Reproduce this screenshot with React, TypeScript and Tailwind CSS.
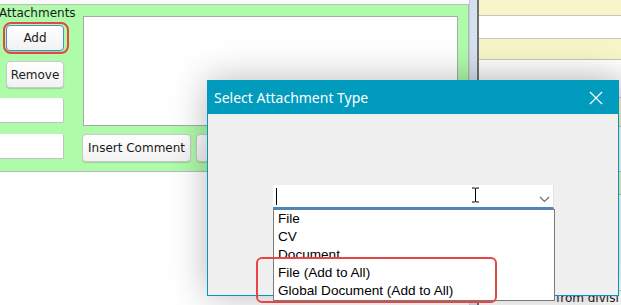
import React from "react";

const leftFont = { fontFamily: '"DejaVu Sans", sans-serif' };

function WinButton({ label, focused, className }: { label: string; focused?: boolean; className?: string }) {
  return (
    <div
      className={
        "flex items-center justify-center rounded-[4px] border bg-gradient-to-b from-white to-[#f2f2f2] text-[12px] text-[#1a1a1a] shadow-[0_1px_1px_rgba(0,0,0,0.15)] " +
        (focused ? "border-[#4a90d0] " : "border-[#c9c9c9] ") +
        (className ?? "")
      }
    >
      {label}
    </div>
  );
}

function RightRows() {
  const rows = [
    { bg: "bg-[#f7f6c8]", h: "h-[16px]" },
    { bg: "bg-white", h: "h-[23px]" },
    { bg: "bg-[#f7f6c8]", h: "h-[21px]" },
    { bg: "bg-gradient-to-b from-white to-[#f2f2f2]", h: "h-[38px]" },
    { bg: "bg-[#f7f6c8]", h: "h-[29px]" },
    { bg: "bg-white", h: "h-[45px]" },
    { bg: "bg-[#f7f6c8]", h: "h-[23px]" },
    { bg: "bg-white", h: "h-[96px]" },
  ];
  return (
    <div className="flex flex-1 flex-col">
      {rows.map((r, i) => (
        <div key={i} className={`${r.bg} ${r.h} border-b border-[#c4c4c4]`} />
      ))}
      <div className="flex-1 bg-white pl-[77px] text-[12px] leading-[14px] text-[#222]" style={leftFont}>
        from divisi
      </div>
    </div>
  );
}

export default function App() {
  const items = ["File", "CV", "Document", "File (Add to All)", "Global Document (Add to All)"];
  return (
    <div className="relative h-[305px] w-[621px] overflow-hidden bg-white">
      <div className="flex h-full">
        {/* left form area */}
        <div className="flex w-[469px] flex-col" style={leftFont}>
          <div className="h-[5px] border-b border-[#bdbdbd] bg-[#fafafa]" />
          <div className="flex h-[167px] border-b border-r border-[#b8b8b8] bg-[#aefbaa]">
            <div className="flex w-[66px] flex-col">
              <div className="-ml-[1px] h-[16px] text-[12px] leading-[16px] text-[#1a1a1a]">Attachments</div>
              <div className="ml-[6px] mt-[4px] rounded-[5px] outline-2 outline-offset-1 outline-[#e84545]">
                <WinButton label="Add" focused className="h-[26px] w-[58px]" />
              </div>
              <WinButton label="Remove" className="ml-[6px] mt-[10px] h-[27px] w-[58px]" />
              <div className="mt-[10px] h-[25px] w-[64px] rounded-r-[2px] border-b border-r border-[#c2c2c2] bg-white" />
              <div className="mt-[11px] h-[25px] w-[64px] rounded-r-[2px] border-b border-r border-[#c2c2c2] bg-white" />
            </div>
            <div className="ml-[16px] flex flex-col pt-[11px]">
              <div className="ml-[1px] h-[110px] w-[375px] border border-[#a8a8a8] bg-white" />
              <div className="mt-[8px] flex gap-[5px]">
                <WinButton label="Insert Comment" className="h-[28px] w-[109px]" />
                <WinButton label="Attach" className="h-[28px] w-[80px]" />
              </div>
            </div>
          </div>
          <div className="flex-1 bg-white" />
        </div>
        {/* splitter */}
        <div className="w-[10px] border-l border-r-2 border-l-[#c0ccd8] border-r-[#6f6f6f] bg-[#d5e1ee]" />
        <RightRows />
      </div>

      {/* modal dialog */}
      <div className="absolute left-[207px] top-[80px] flex h-[216px] w-[412px] flex-col border border-[#0099bb] bg-[#f0f0f0] shadow-[0_0_35px_rgba(0,0,0,0.28)]">
        <div
          className="flex h-[33px] items-center justify-between bg-[#009bbd] pl-[6px] pr-[15px] text-[14px] text-white"
          style={{ fontFamily: '"Noto Sans", "Open Sans", sans-serif' }}
        >
          <span>Select Attachment Type</span>
          <svg width="14" height="14" viewBox="0 0 14 14">
            <path d="M1 1 L13 13 M13 1 L1 13" stroke="white" strokeWidth="1.2" />
          </svg>
        </div>
        <div className="pl-[65px] pt-[70px]">
          <div className="relative flex h-[25px] w-[281px] items-center border-b-2 border-b-[#3c8ad0] border-t border-r border-t-[#ececec] border-r-[#e4e4e4] bg-white">
            <div className="ml-[3px] h-[17px] w-[1px] bg-black" />
            <svg className="absolute left-[198px] top-[2px]" width="9" height="16" viewBox="0 0 9 16">
              <path d="M1 1 H3.5 Q4.5 1 4.5 2 V14 Q4.5 15 3.5 15 H1 M8 1 H5.5 Q4.5 1 4.5 2 M4.5 14 Q4.5 15 5.5 15 H8" stroke="black" strokeWidth="1" fill="none" />
            </svg>
            <svg className="absolute left-[266px] top-[11px]" width="11" height="7" viewBox="0 0 11 7">
              <path d="M1 1 L5.5 5.5 L10 1" stroke="#6b6b6b" strokeWidth="1.2" fill="none" />
            </svg>
          </div>
        </div>
      </div>

      {/* dropdown list */}
      <div
        className="absolute left-[273px] top-[209px] w-[282px] border border-[#7a7a7a] bg-white text-[13.6px] leading-[18px] text-black"
        style={{ fontFamily: '"Liberation Sans", Arial, sans-serif' }}
      >
        {items.map((t) => (
          <div key={t} className="h-[18px] pl-[4px]">
            {t}
          </div>
        ))}
      </div>

      {/* red annotation */}
      <div className="absolute left-[256px] top-[257px] h-[46px] w-[241px] rounded-[6px] border-2 border-[#e84545]" />
    </div>
  );
}
